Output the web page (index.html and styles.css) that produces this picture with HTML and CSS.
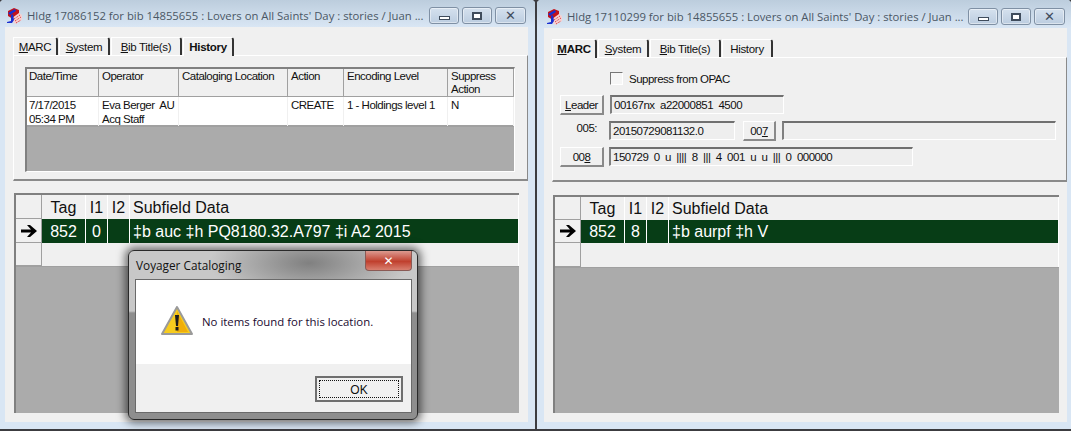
FILE: index.html
```html
<!DOCTYPE html>
<html lang="en">
<head>
    <meta charset="UTF-8">
    <title>Voyager Cataloging</title>
    <link rel="stylesheet" href="styles.css">
</head>
<body>
    <div class="desktop">
        <section class="window window-left">
            <div class="titlebar">
                <svg class="app-icon" viewBox="0 0 15 16" width="15" height="16">
                    <polygon points="1,3 7,0 12,2 12,8 6,11 1,8" fill="#c4121a"/>
                    <polygon points="5,10 12,5 15,7 15,12 8,16 5,12" fill="#f6d0d0"/>
                    <path d="M7 11l6-4M8 13l6-4M9 15l5-3" stroke="#d8232a" stroke-width="1" stroke-dasharray="1 1" fill="none"/>
                    <polygon points="1,5 8,1 9,3 3,7" fill="#1a2fd0"/>
                    <polygon points="4,7 6,6 7,12 5,15 0,15 0,14 4,13" fill="#1a2fd0"/>
                </svg>
                <span class="title">Hldg 17086152 for bib 14855655 : Lovers on All Saints' Day : stories / Juan ...</span>
                <div class="caption-buttons">
                    <span class="caption-btn"><i class="glyph-min"></i></span>
                    <span class="caption-btn"><i class="glyph-max"></i></span>
                    <span class="caption-btn glyph-close">&#10005;</span>
                </div>
            </div>
            <div class="client">
                <div class="tabs">
                    <span class="tab tab-marc"><u>M</u>ARC</span>
                    <span class="tab tab-system"><u>S</u>ystem</span>
                    <span class="tab tab-bib"><u>B</u>ib Title(s)</span>
                    <span class="tab tab-history active">History</span>
                </div>
                <div class="tab-pane">
                    <div class="history-table">
                        <div class="history-row history-head">
                            <div>Date/Time</div>
                            <div>Operator</div>
                            <div>Cataloging Location</div>
                            <div>Action</div>
                            <div>Encoding Level</div>
                            <div>Suppress Action</div>
                        </div>
                        <div class="history-row history-body">
                            <div>7/17/2015<br>05:34 PM</div>
                            <div>Eva Berger&nbsp; AU<br>Acq Staff</div>
                            <div></div>
                            <div>CREATE</div>
                            <div>1 - Holdings level 1</div>
                            <div>N</div>
                        </div>
                    </div>
                </div>
                <div class="marc-grid">
                    <div class="marc-row marc-head">
                        <div class="selector"></div>
                        <div class="tag">Tag</div>
                        <div>I1</div>
                        <div>I2</div>
                        <div class="subfield">Subfield Data</div>
                    </div>
                    <div class="marc-row marc-data">
                        <div class="selector">
                            <svg viewBox="0 0 16 12" width="16" height="12"><path d="M0 4.500h10L6 0h3l7 6-7 6H6l4-4.500H0z" fill="#000"/></svg>
                        </div>
                        <div class="tag">852</div>
                        <div>0</div>
                        <div></div>
                        <div class="subfield">&Dagger;b auc &Dagger;h PQ8180.32.A797 &Dagger;i A2 2015</div>
                    </div>
                    <div class="marc-row marc-empty">
                        <div class="selector"></div>
                        <div class="blank"></div>
                    </div>
                </div>
            </div>
        </section>

        <section class="window window-right">
            <div class="titlebar">
                <svg class="app-icon" viewBox="0 0 15 16" width="15" height="16">
                    <polygon points="1,3 7,0 12,2 12,8 6,11 1,8" fill="#c4121a"/>
                    <polygon points="5,10 12,5 15,7 15,12 8,16 5,12" fill="#f6d0d0"/>
                    <path d="M7 11l6-4M8 13l6-4M9 15l5-3" stroke="#d8232a" stroke-width="1" stroke-dasharray="1 1" fill="none"/>
                    <polygon points="1,5 8,1 9,3 3,7" fill="#1a2fd0"/>
                    <polygon points="4,7 6,6 7,12 5,15 0,15 0,14 4,13" fill="#1a2fd0"/>
                </svg>
                <span class="title">Hldg 17110299 for bib 14855655 : Lovers on All Saints' Day : stories / Juan ...</span>
                <div class="caption-buttons">
                    <span class="caption-btn"><i class="glyph-min"></i></span>
                    <span class="caption-btn"><i class="glyph-max"></i></span>
                    <span class="caption-btn glyph-close">&#10005;</span>
                </div>
            </div>
            <div class="client">
                <div class="tabs">
                    <span class="tab tab-marc active"><u>M</u>ARC</span>
                    <span class="tab tab-system"><u>S</u>ystem</span>
                    <span class="tab tab-bib"><u>B</u>ib Title(s)</span>
                    <span class="tab tab-history">History</span>
                </div>
                <div class="tab-pane marc-pane">
                    <label class="check-row"><span class="checkbox"></span>Suppress from OPAC</label>
                    <div class="field-row leader-row">
                        <span class="btn btn-wide"><u>L</u>eader</span>
                        <span class="field field-leader">00167nx&nbsp; a22000851&nbsp; 4500</span>
                    </div>
                    <div class="field-row">
                        <span class="field-label">005:</span>
                        <span class="field field-005">20150729081132.0</span>
                        <span class="btn btn-007">00<u>7</u></span>
                        <span class="field field-007"></span>
                    </div>
                    <div class="field-row">
                        <span class="btn btn-wide">00<u>8</u></span>
                        <span class="field field-008">150729&nbsp; 0&nbsp; u&nbsp; ||||&nbsp; 8&nbsp; |||&nbsp; 4&nbsp; 001&nbsp; u&nbsp; u&nbsp; |||&nbsp; 0&nbsp; 000000</span>
                    </div>
                </div>
                <div class="marc-grid">
                    <div class="marc-row marc-head">
                        <div class="selector"></div>
                        <div class="tag">Tag</div>
                        <div>I1</div>
                        <div>I2</div>
                        <div class="subfield">Subfield Data</div>
                    </div>
                    <div class="marc-row marc-data">
                        <div class="selector">
                            <svg viewBox="0 0 16 12" width="16" height="12"><path d="M0 4.500h10L6 0h3l7 6-7 6H6l4-4.500H0z" fill="#000"/></svg>
                        </div>
                        <div class="tag">852</div>
                        <div>8</div>
                        <div></div>
                        <div class="subfield">&Dagger;b aurpf &Dagger;h V</div>
                    </div>
                    <div class="marc-row marc-empty">
                        <div class="selector"></div>
                        <div class="blank"></div>
                    </div>
                </div>
            </div>
        </section>
    </div>

    <div class="dialog">
        <div class="dialog-title">
            <span>Voyager Cataloging</span>
            <span class="dialog-close">&#10005;</span>
        </div>
        <div class="dialog-inner">
            <div class="dialog-message">
                <svg viewBox="0 0 32 30" width="32" height="30">
                    <polygon points="16,1 31,28 1,28" fill="#f7cc1e" stroke="#9a9a9a" stroke-width="2" stroke-linejoin="round"/>
                    <polygon points="16,5 27,26 16,26" fill="#f0ae0a"/>
                    <path d="M14 9h4l-1 11h-2z" fill="#1c1c1c"/>
                    <rect x="14.500" y="21" width="3" height="3.500" fill="#1c1c1c"/>
                </svg>
                <span>No items found for this location.</span>
            </div>
            <div class="dialog-footer">
                <span class="ok-btn"><span>OK</span></span>
            </div>
        </div>
    </div>
</body>
</html>
```

FILE: styles.css
```css
* {
    box-sizing: border-box;
}

body {
    margin: 0;
    height: 431px;
    overflow: hidden;
    background-color: #3c3c40;
    font-family: 'Liberation Sans', sans-serif;
    font-size: 11px;
    color: #111111;
}

.desktop {
    display: flex;
    gap: 2px;
    height: 429px;
}

.window {
    display: flex;
    flex-direction: column;
    background-color: #d9e6f4;
    border-radius: 4px 4px 0 0;
}

.window-left {
    width: 535px;
}

.window-right {
    width: 534px;
}

/* title bar */
.titlebar {
    display: flex;
    align-items: center;
    flex-shrink: 0;
    background: linear-gradient(#bccddd, #d9e6f4);
    border-radius: 4px 4px 0 0;
}

.window-left .titlebar {
    height: 27px;
    padding: 4px 9px 0 7px;
}

.window-right .titlebar {
    height: 28px;
    padding: 5px 6px 0 10px;
}

.app-icon {
    flex-shrink: 0;
    margin-right: 5px;
}

.title {
    flex: 1;
    min-width: 0;
    font-family: 'Open Sans', sans-serif;
    font-size: 11.300px;
    white-space: nowrap;
    color: #4a5765;
}

.caption-buttons {
    display: flex;
    align-self: flex-start;
    gap: 3px;
    margin-top: 3px;
}

.caption-btn {
    display: flex;
    justify-content: center;
    align-items: center;
    width: 30px;
    height: 17px;
    border: 1px solid #7f90a4;
    border-radius: 3px;
    background: linear-gradient(#d5e1ee, #bccde0);
    box-shadow: inset 0 0 0 1px rgba(255, 255, 255, 0.45);
    color: #3f4c5c;
    font-size: 12px;
    font-weight: bold;
}

.glyph-min {
    display: block;
    width: 11px;
    height: 4px;
    margin-top: 5px;
    border: 1px solid #3f4c5c;
    background-color: #ffffff;
}

.glyph-max {
    display: block;
    width: 10px;
    height: 8px;
    border: 2px solid #3f4c5c;
    background-color: #ffffff;
}

.glyph-close {
    width: 31px;
    font-family: 'DejaVu Sans', sans-serif;
    font-size: 13px;
}

/* client area */
.client {
    display: flex;
    flex-direction: column;
    flex: 1;
    background-color: #f0f0f0;
    padding: 9px 0 9px 8px;
}

.window-left .client {
    margin: 0 7px 7px 5px;
}

.window-right .client {
    margin: 0 4px 7px 7px;
}

.tabs {
    display: flex;
    flex-shrink: 0;
    gap: 1px;
    height: 19px;
    align-items: flex-end;
    position: relative;
    z-index: 1;
}

.window-right .tabs {
    height: 20px;
}

.tab {
    display: flex;
    justify-content: center;
    align-items: center;
    height: 18px;
    border-top: 1px solid #ffffff;
    border-left: 1px solid #ffffff;
    border-right: 2px solid #333333;
    border-top-right-radius: 3px;
    background-color: #f0f0f0;
    font-size: 11.500px;
    letter-spacing: -0.300px;
}

.tab.active {
    height: 19px;
    font-weight: bold;
    margin-bottom: -1px;
}

.tab-marc {
    width: 45px;
}

.tab-system {
    width: 51px;
}

.tab-bib {
    width: 71px;
}

.tab-history {
    width: 51px;
}

.tab-pane {
    height: 126px;
    padding: 11px 12px 0 11px;
    border-top: 1px solid #ffffff;
    border-left: 1px solid #ffffff;
    border-right: 1px solid #8a8a8a;
    border-bottom: 2px solid #8a8a8a;
}

/* history table */
.history-table {
    height: 105px;
    background-color: #ababab;
    border-top: 2px solid #808080;
    border-left: 2px solid #808080;
    border-right: 1px solid #ffffff;
    border-bottom: 1px solid #ffffff;
}

.history-row {
    display: grid;
    grid-template-columns: 72px 80px 109px 56px 104px 66px;
}

.history-row > div {
    padding: 1px 3px 0 3px;
    line-height: 13px;
    font-size: 11.500px;
    letter-spacing: -0.500px;
}

.history-row > div:first-child {
    padding-left: 2px;
}

.history-head {
    height: 28px;
    background-color: #f0f0f0;
    border-bottom: 1px solid #a0a0a0;
}

.history-head > div {
    border-right: 1px solid #a0a0a0;
}

.history-body {
    height: 30px;
    background-color: #ffffff;
    border-bottom: 2px solid #a0a0a0;
}

.history-row.history-body > div {
    line-height: 14px;
    border-right: 1px solid #f0f0f0;
}

/* marc grid */
.marc-grid {
    flex: 1;
    margin: 12px 9px 0 1px;
    background-color: #ababab;
    border-top: 2px solid #808080;
    border-left: 2px solid #808080;
    font-size: 16px;
}

.window-right .marc-grid {
    margin: 13px 8px 0 1px;
}

.marc-row {
    display: grid;
    grid-template-columns: 26px 44px 22px 22px 1fr;
    grid-template-rows: minmax(0, 1fr);
    line-height: 25px;
}

.window-right .marc-row {
    line-height: 24px;
}

.marc-row > div {
    border-right: 1px solid #ffffff;
}

.marc-row .tag {
    text-align: center;
}

.marc-row > div:nth-child(3),
.marc-row > div:nth-child(4) {
    text-align: center;
}

.subfield {
    padding-left: 3px;
}

.marc-row .selector {
    display: flex;
    justify-content: center;
    align-items: center;
    background-color: #f0f0f0;
    border-right: 1px solid #a0a0a0;
    border-bottom: 1px solid #a0a0a0;
}

.marc-head {
    height: 24px;
    background-color: #f0f0f0;
}

.marc-data {
    height: 24px;
    background-color: #073d16;
    color: #ffffff;
}

.marc-empty {
    grid-template-columns: 26px 1fr;
    height: 24px;
    background-color: #f0f0f0;
    border-bottom: 1px solid #a0a0a0;
}

.window-right .marc-head,
.window-right .marc-data {
    height: 23px;
}

.window-right .marc-empty {
    height: 25px;
}

/* marc tab controls */
.marc-pane {
    display: flex;
    flex-direction: column;
    gap: 6px;
    height: 125px;
    padding: 14px 0 0 7px;
}

.check-row {
    display: flex;
    align-items: center;
    gap: 6px;
    height: 13px;
    margin: 0 0 4px 50px;
    font-size: 11.500px;
    letter-spacing: -0.500px;
}

.checkbox {
    width: 13px;
    height: 13px;
    background-color: #f6f6f6;
    border-top: 1px solid #777777;
    border-left: 1px solid #777777;
    border-right: 1px solid #ffffff;
    border-bottom: 1px solid #ffffff;
}

.field-row {
    display: flex;
    gap: 5px;
    height: 20px;
    align-items: flex-start;
    font-size: 11.500px;
    letter-spacing: -0.500px;
}

.leader-row {
    gap: 6px;
}

.btn {
    display: flex;
    justify-content: center;
    align-items: center;
    height: 20px;
    background-color: #f0f0f0;
    border-top: 1px solid #ffffff;
    border-left: 1px solid #ffffff;
    border-right: 2px solid #8a8a8a;
    border-bottom: 2px solid #8a8a8a;
}

.btn-wide {
    width: 44px;
}

.btn-007 {
    width: 33px;
    margin: 0 1px 0 3px;
}

.field-label {
    width: 44px;
    padding: 1px 7px 0 0;
    text-align: right;
}

.field {
    height: 19px;
    padding: 2px 0 0 2px;
    white-space: nowrap;
    background-color: #eeeeee;
    border-top: 2px solid #707070;
    border-left: 2px solid #808080;
    border-right: 1px solid #ffffff;
    border-bottom: 1px solid #ffffff;
}

.field-leader {
    width: 174px;
}

.field-005 {
    width: 126px;
}

.field-007 {
    width: 274px;
}

.field-008 {
    width: 304px;
}

/* message box */
.dialog {
    position: absolute;
    left: 128px;
    top: 250px;
    width: 290px;
    height: 170px;
    display: flex;
    flex-direction: column;
    padding: 0 5px 6px 6px;
    border: 1px solid #2a2a2a;
    border-radius: 6px;
    background:
        radial-gradient(ellipse 100px 38px at 180px 12px, #808080, rgba(128, 128, 128, 0)),
        linear-gradient(#c8c8c8 0, #c8c8c8 60px, #8e8e8e 62px, #8e8e8e 100%);
    box-shadow: 0 0 9px 3px rgba(0, 0, 0, 0.55);
}

.dialog-title {
    display: flex;
    justify-content: space-between;
    flex-shrink: 0;
    height: 28px;
    padding: 6px 0 0 1px;
    font-family: 'Open Sans', sans-serif;
    font-size: 11.800px;
    color: #111111;
}

.dialog-close {
    display: flex;
    justify-content: center;
    align-items: center;
    width: 47px;
    height: 20px;
    margin-top: -6px;
    border: 1px solid #8a5a55;
    border-top: none;
    border-radius: 0 0 4px 4px;
    background: linear-gradient(#dc9a90, #c0402e 55%, #d98070);
    color: #ffffff;
    font-family: 'DejaVu Sans', sans-serif;
    font-size: 12px;
    font-weight: bold;
}

.dialog-inner {
    display: flex;
    flex-direction: column;
    flex: 1;
    border: 1px solid #6a6a6a;
    background-color: #f0f0f0;
}

.dialog-message {
    display: flex;
    align-items: center;
    gap: 9px;
    height: 84px;
    padding: 0 0 2px 25px;
    background-color: #ffffff;
    font-family: 'Open Sans', sans-serif;
    font-size: 11.400px;
    color: #1a0a30;
}

.dialog-footer {
    display: flex;
    justify-content: flex-end;
    padding: 12px 8px 0 0;
}

.ok-btn {
    display: flex;
    width: 88px;
    height: 26px;
    padding: 2px;
    background-color: #f0f0f0;
    border: 2px solid #6f6f6f;
    font-size: 12px;
}

.ok-btn span {
    flex: 1;
    text-align: center;
    line-height: 18px;
    border: 1px dotted #111111;
}
```
